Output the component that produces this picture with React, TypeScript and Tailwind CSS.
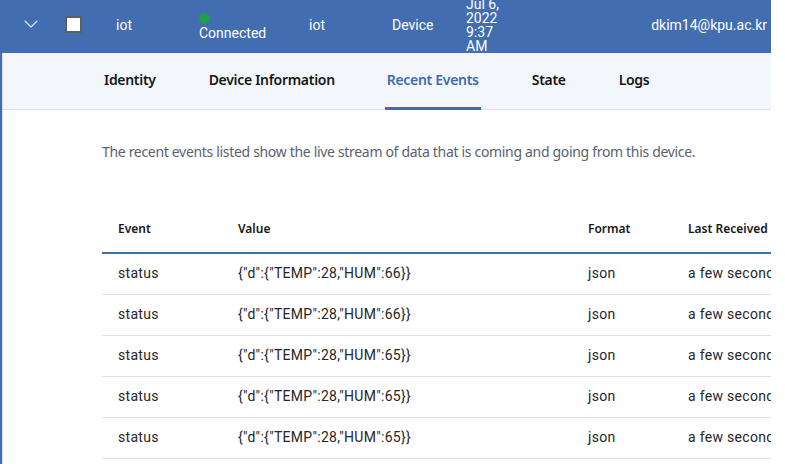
import { ChevronDown } from 'lucide-react';

const tabs = ['Identity', 'Device Information', 'Recent Events', 'State', 'Logs'];

const events = [
  { event: 'status', value: '{"d":{"TEMP":28,"HUM":66}}', format: 'json', last: 'a few seconds ago' },
  { event: 'status', value: '{"d":{"TEMP":28,"HUM":66}}', format: 'json', last: 'a few seconds ago' },
  { event: 'status', value: '{"d":{"TEMP":28,"HUM":65}}', format: 'json', last: 'a few seconds ago' },
  { event: 'status', value: '{"d":{"TEMP":28,"HUM":65}}', format: 'json', last: 'a few seconds ago' },
  { event: 'status', value: '{"d":{"TEMP":28,"HUM":65}}', format: 'json', last: 'a few seconds ago' },
];

export default function App() {
  const active = 'Recent Events';

  return (
    <div className="w-[785px] h-[464px] bg-white overflow-hidden font-['Roboto',sans-serif]">
      <div className="w-[771px] h-full overflow-hidden flex flex-col">
        {/* device row */}
        <div className="h-[53px] shrink-0 bg-[#426db0] text-white text-[14px] flex items-center overflow-hidden">
          <div className="w-[60px] pl-[19px] flex items-center -mt-[5px]">
            <ChevronDown className="w-[24px] h-[24px] text-[#e3e9f4]" strokeWidth={1.1} />
          </div>
          <div className="w-[56px] flex items-center pl-[5px] -mt-[4px]">
            <div className="w-[17px] h-[17px] bg-white border-2 border-[#5b6068]" />
          </div>
          <div className="w-[83px] -mt-[3px]">iot</div>
          <div className="w-[110px] flex flex-col pt-[1px]">
            <span className="w-[11px] h-[11px] rounded-full bg-[#1e9e4a]" />
            <span className="leading-[16px] mt-[1px]">Connected</span>
          </div>
          <div className="w-[83px] -mt-[3px]">iot</div>
          <div className="w-[74px] -mt-[3px]">Device</div>
          <div className="w-[100px] leading-[14px] -mt-[4px]">
            <div>Jul 6,</div>
            <div>2022</div>
            <div>9:37</div>
            <div>AM</div>
          </div>
          <div className="flex-1 text-right pr-[4px] -mt-[3px]">dkim14@kpu.ac.kr</div>
        </div>

        {/* detail panel */}
        <div className="flex-1 border-l-[2px] border-[#426db0]">
          <div className="h-full border-l border-[#dde1e6]">
            <nav className="h-[57px] bg-[#f3f6fa] border-b border-[#e0e0e0] flex pl-[101px] font-['Noto_Sans',sans-serif] text-[14px] font-semibold text-[#161616]">
              {tabs.map((t) => (
                <div
                  key={t}
                  className={`relative flex items-center h-full pb-[4px] tracking-[-0.3px] ${
                    t === 'Device Information' ? 'mr-[52px]' : 'mr-[53px]'
                  } ${t === active ? 'text-[#3f6cae]' : ''}`}
                >
                  {t}
                  {t === active && (
                    <span className="absolute left-[-2px] right-[-2px] bottom-[-1px] h-[3px] bg-[#3f6cae]" />
                  )}
                </div>
              ))}
            </nav>

            <div className="pl-[99px]">
              <p className="mt-[31px] text-[14px] text-[#5a6170] font-['Noto_Sans',sans-serif] tracking-[-0.32px] whitespace-nowrap">
                The recent events listed show the live stream of data that is coming and going from this device.
              </p>

              <table className="mt-[46px] w-[700px] table-fixed border-collapse text-[14px] tracking-[0.3px] text-[#262626]">
                <colgroup>
                  <col className="w-[136px]" />
                  <col className="w-[350px]" />
                  <col className="w-[100px]" />
                  <col />
                </colgroup>
                <thead>
                  <tr className="h-[45px] border-b-2 border-[#426db0] text-[12px] tracking-normal text-[#161616] font-['Noto_Sans',sans-serif]">
                    <th className="text-left font-semibold pl-[16px] pb-[2px]">Event</th>
                    <th className="text-left font-semibold pb-[2px]">Value</th>
                    <th className="text-left font-semibold pb-[2px]">Format</th>
                    <th className="text-left font-semibold whitespace-nowrap pb-[2px]">Last Received</th>
                  </tr>
                </thead>
                <tbody>
                  {events.map((e, i) => (
                    <tr key={i} className="h-[41px] border-b border-[#e0e0e0]">
                      <td className="pl-[16px] pb-[1px]">{e.event}</td>
                      <td className="pb-[1px]">{e.value}</td>
                      <td className="pb-[1px]">{e.format}</td>
                      <td className="whitespace-nowrap overflow-hidden pb-[1px]">{e.last}</td>
                    </tr>
                  ))}
                </tbody>
              </table>
            </div>
          </div>
        </div>
      </div>
    </div>
  );
}
